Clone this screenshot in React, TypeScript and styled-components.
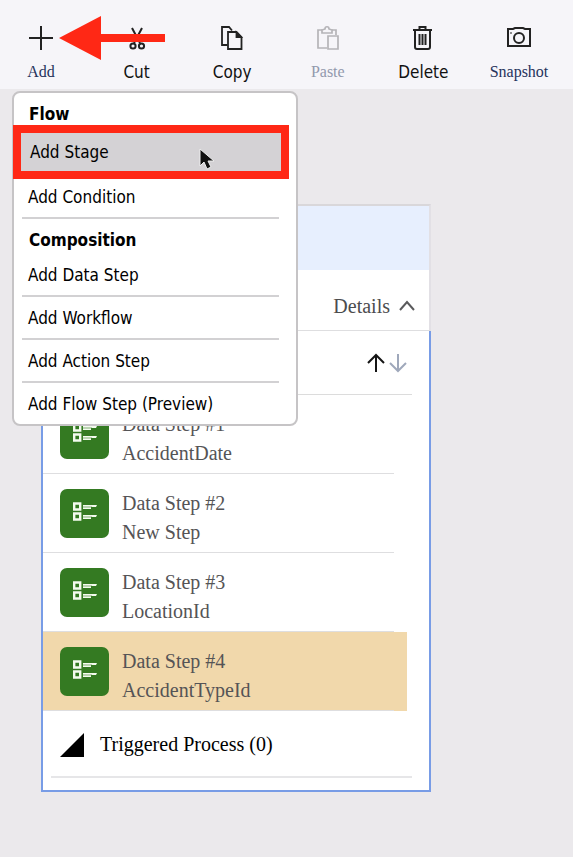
import React from 'react';
import styled, { createGlobalStyle, css } from 'styled-components';

const sans = '"DejaVu Sans Condensed", "Noto Sans", sans-serif';
const serif = '"Liberation Serif", serif';

const GlobalStyle = createGlobalStyle`
  *, *::before, *::after { box-sizing: border-box; }
  body {
    margin: 0;
    min-height: 100vh;
    background: #ebe9ec;
    font-family: ${serif};
    color: #000;
  }
  button { border: 0; padding: 0; background: none; color: inherit; text-align: left; cursor: pointer; }
`;

const Page = styled.div`
  position: relative;
  padding-bottom: 24px;
`;

const Toolbar = styled.header`
  display: flex;
  justify-content: space-between;
  height: 89px;
  padding: 24px 13px 0 0;
  background: #f6f5f9;
`;

const ToolButton = styled.button<{ $serif?: boolean; $tone?: string }>`
  display: flex;
  flex-direction: column;
  align-items: center;
  gap: 10px;
  width: 82px;
  height: 60px;
  color: #222;
  font: ${(p) => (p.$serif ? `16px/20px ${serif}` : `17px/20px ${sans}`)};
  span { color: ${(p) => p.$tone ?? '#111'}; }
  &:disabled { color: #b5b4b8; cursor: default; }
`;

const ToolIcon = styled.svg`
  width: 28px;
  height: 28px;
  overflow: visible;
`;

const Arrow = styled.svg`
  position: absolute;
  left: 59px;
  top: 16px;
  z-index: 3;
  width: 107px;
  height: 44px;
  pointer-events: none;
`;

const Menu = styled.nav`
  position: absolute;
  left: 12px;
  top: 91px;
  z-index: 2;
  width: 286px;
  padding: 10px 17px 0 8px;
  border: 2px solid #c6c4c6;
  border-radius: 8px;
  background: #fff;
  font: 17px/24px ${sans};
`;

const MenuTitle = styled.h2`
  margin: 0;
  padding-left: 7px;
  font: bold 17px/22px ${sans};
`;

const MenuItem = styled.button<{ $last?: boolean }>`
  display: block;
  width: 100%;
  height: 43px;
  padding: 0 6px;
  border-bottom: 2px solid #d2d1d3;
  font: inherit;
  ${(p) => p.$last && css`border-bottom-color: #c6c4c6; margin-bottom: -2px;`}
`;

const MenuGroup = styled.div`
  padding-top: 10px;
  ${MenuTitle} { margin-bottom: 3px; }
`;

const ActiveItem = styled.button`
  position: relative;
  display: block;
  width: 276px;
  height: 54px;
  margin: 0 0 -3px -9px;
  padding: 0 9px;
  border: 8px solid #ff2815;
  background: #d4d2d5;
  font: inherit;
`;

const Pointer = styled.svg`
  position: absolute;
  left: 177px;
  top: 15px;
  width: 17px;
  height: 22px;
`;

const Card = styled.main`
  max-width: 390px;
  margin: 115px 16px 0 41px;
  background: #fff;
`;

const CardBand = styled.div`
  height: 66px;
  border-top: 2px solid #d9d7da;
  border-right: 2px solid #e2e0e5;
  background: #e7effe;
`;

const DetailsRow = styled.div`
  display: flex;
  justify-content: flex-end;
  align-items: center;
  height: 61px;
  padding: 11px 14px 0 0;
  border-right: 2px solid #e2e0e5;
  border-bottom: 1px solid #dedee0;
`;

const DetailsButton = styled.button`
  display: flex;
  align-items: center;
  gap: 9px;
  color: #4c4c4e;
  font: 20px/24px ${serif};
`;

const CardBody = styled.div`
  border: 2px solid #789ce6;
  border-top: 0;
  padding-bottom: 12px;
`;

const OrderRow = styled.div`
  display: flex;
  justify-content: flex-end;
  align-items: center;
  height: 64px;
  margin: 0 17px 0 8px;
  padding-right: 3px;
  border-bottom: 1px solid #dcdcdc;
`;

const IconButton = styled.button`
  width: 22px;
  height: 22px;
  svg { display: block; margin: 0 auto; }
`;

const StepList = styled.ul`
  margin: 0;
  padding: 0 22px 0 0;
  list-style: none;
`;

const Step = styled.li<{ $selected?: boolean }>`
  display: flex;
  align-items: flex-start;
  gap: 13px;
  height: 79px;
  padding: 15px 0 0 17px;
  background: linear-gradient(#dedee0, #dedee0) left bottom / calc(100% - 13px) 1px no-repeat
    ${(p) => (p.$selected ? '#f1d8ab' : '#fff')};
`;

const StepBadge = styled.div`
  display: flex;
  justify-content: center;
  align-items: center;
  width: 49px;
  height: 49px;
  padding-bottom: 4px;
  border-radius: 7px;
  background: #347a22;
`;

const StepText = styled.div`
  color: #555456;
  font: 20px/29px ${serif};
  p { margin: 0; }
`;

const TriggeredRow = styled.button`
  display: flex;
  align-items: center;
  gap: 16px;
  width: calc(100% - 25px);
  height: 67px;
  margin-left: 8px;
  padding: 0 9px;
  border-bottom: 2px solid #e6e6e8;
  font: 20px/24px ${serif};
  svg { margin-top: 3px; }
`;

type Tool = { label: string; icon: React.ReactNode; serif?: boolean; tone?: string; disabled?: boolean };

const tools: Tool[] = [
  { label: 'Add', serif: true, tone: '#26335c', icon: <path d="M14 2v24M2 14h24" strokeWidth="2" /> },
  {
    label: 'Cut',
    icon: (
      <g strokeWidth="2">
        <path d="M9 4l8 15M19 4l-8 15" />
        <circle cx="10" cy="22" r="2.600" />
        <circle cx="18.500" cy="22" r="2.600" />
      </g>
    ),
  },
  {
    label: 'Copy',
    icon: (
      <g strokeWidth="1.800">
        <path d="M9.500 21H4V3h7l3 3.500" />
        <path d="M10 8h8.500l5 5v12H10z" />
        <path d="M18.500 8.500v4.500H23z" fill="currentColor" />
      </g>
    ),
  },
  {
    label: 'Paste',
    serif: true,
    tone: '#9299ad',
    disabled: true,
    icon: (
      <g strokeWidth="1.700">
        <path d="M13 24H4V6h4M18 6h4v5" />
        <path d="M8 9V6l3-1c0-3 4-3 4 0l3 1v3z" />
        <path d="M14 12h10v13H14z" />
      </g>
    ),
  },
  {
    label: 'Delete',
    icon: (
      <g strokeWidth="2">
        <path d="M4 6h19M10.500 6V3h6v3M6 6v17q0 2 2 2h11q2 0 2-2V6" />
        <path d="M10.500 10v11M13.500 10v11M16.500 10v11" />
      </g>
    ),
  },
  {
    label: 'Snapshot',
    serif: true,
    tone: '#26335c',
    icon: (
      <g strokeWidth="2">
        <path d="M3 5h5l2-1h8l2 1h5v17H3z" />
        <circle cx="14" cy="14" r="5" />
        <path d="M5 9h2" strokeWidth="1" />
      </g>
    ),
  },
];

const steps = [
  { title: 'Data Step #1', name: 'AccidentDate' },
  { title: 'Data Step #2', name: 'New Step' },
  { title: 'Data Step #3', name: 'LocationId' },
  { title: 'Data Step #4', name: 'AccidentTypeId', selected: true },
];

const compositionItems = ['Add Data Step', 'Add Workflow', 'Add Action Step', 'Add Flow Step (Preview)'];

const FormIcon = () => (
  <svg width="24" height="19" viewBox="0 0 24 19" fill="none" stroke="#f4fbef" aria-hidden="true">
    <path d="M1.200 1.500h6v6h-6zM1.200 11.500h6v6h-6z" strokeWidth="2.400" />
    <path d="M10 3h14l-1 2h-5v2h-8zM10 13h14l-1 2h-5v2h-8z" fill="#f4fbef" stroke="none" />
    <path d="M10 5h9M10 15h9" stroke="#347a22" strokeWidth="0.600" />
  </svg>
);

export default function App() {
  return (
    <Page>
      <GlobalStyle />
      <Toolbar>
        {tools.map((tool) => (
          <ToolButton key={tool.label} $serif={tool.serif} $tone={tool.tone} disabled={tool.disabled}>
            <ToolIcon viewBox="0 0 28 28" fill="none" stroke="currentColor" aria-hidden="true">
              {tool.icon}
            </ToolIcon>
            <span>{tool.label}</span>
          </ToolButton>
        ))}
      </Toolbar>
      <Arrow viewBox="0 0 107 44" aria-hidden="true">
        <path d="M0 22L42 0V18H106V26H42V44Z" fill="#ff2815" />
      </Arrow>

      <Menu aria-label="Add">
        <MenuTitle>Flow</MenuTitle>
        <ActiveItem>
          Add Stage
          <Pointer viewBox="0 0 17 22" aria-hidden="true">
            <path d="M2 1v17l4-4 3 7 4-2-3-6h6z" fill="#111" stroke="#eee" strokeWidth="1" />
          </Pointer>
        </ActiveItem>
        <MenuItem>Add Condition</MenuItem>
        <MenuGroup>
          <MenuTitle>Composition</MenuTitle>
          {compositionItems.map((item, i) => (
            <MenuItem key={item} $last={i === compositionItems.length - 1}>{item}</MenuItem>
          ))}
        </MenuGroup>
      </Menu>

      <Card>
        <CardBand />
        <DetailsRow>
          <DetailsButton>
            Details
            <svg width="16" height="12" viewBox="0 0 16 12" fill="none" stroke="#5a5a5c" strokeWidth="2" aria-hidden="true">
              <path d="M1 10l7-8 7 8" />
            </svg>
          </DetailsButton>
        </DetailsRow>
        <CardBody>
          <OrderRow>
            <IconButton aria-label="Move up">
              <svg width="18" height="20" viewBox="0 0 18 20" fill="none" stroke="#151515" strokeWidth="2" aria-hidden="true">
                <path d="M9 19V2M1 10l8-8 8 8" />
              </svg>
            </IconButton>
            <IconButton aria-label="Move down">
              <svg width="18" height="20" viewBox="0 0 18 20" fill="none" stroke="#9fa8bb" strokeWidth="2" aria-hidden="true">
                <path d="M9 1v17M1 10l8 8 8-8" />
              </svg>
            </IconButton>
          </OrderRow>
          <StepList>
            {steps.map((step) => (
              <Step key={step.title} $selected={step.selected}>
                <StepBadge><FormIcon /></StepBadge>
                <StepText>
                  <p>{step.title}</p>
                  <p>{step.name}</p>
                </StepText>
              </Step>
            ))}
          </StepList>
          <TriggeredRow>
            <svg width="24" height="24" viewBox="0 0 24 24" aria-hidden="true">
              <path d="M24 0v24H0z" fill="#000" />
            </svg>
            Triggered Process (0)
          </TriggeredRow>
        </CardBody>
      </Card>
    </Page>
  );
}
